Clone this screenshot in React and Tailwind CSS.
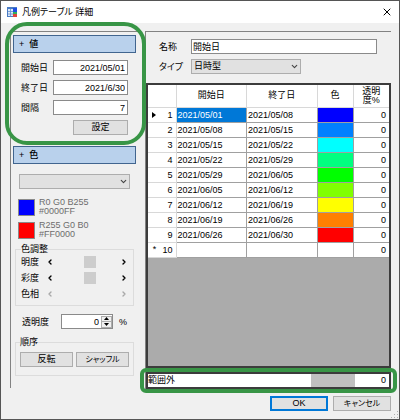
import { ChevronDown, ChevronLeft, ChevronRight, X } from "lucide-react";

const rows = [
  { start: "2021/05/01", end: "2021/05/08", color: "#0000ff" },
  { start: "2021/05/08", end: "2021/05/15", color: "#0080ff" },
  { start: "2021/05/15", end: "2021/05/22", color: "#00ffff" },
  { start: "2021/05/22", end: "2021/05/29", color: "#00ff80" },
  { start: "2021/05/29", end: "2021/06/05", color: "#00ff00" },
  { start: "2021/06/05", end: "2021/06/12", color: "#80ff00" },
  { start: "2021/06/12", end: "2021/06/19", color: "#ffff00" },
  { start: "2021/06/19", end: "2021/06/26", color: "#ff8000" },
  { start: "2021/06/26", end: "2021/06/30", color: "#ff0000" },
  { start: "", end: "", color: "#ffffff" },
];

const values = [
  { id: "start", label: "開始日", value: "2021/05/01" },
  { id: "end", label: "終了日", value: "2021/6/30" },
  { id: "step", label: "間隔", value: "7" },
];

const adjustments = [
  { id: "brightness", label: "明度", enabled: true },
  { id: "saturation", label: "彩度", enabled: true },
  { id: "hue", label: "色相", enabled: false },
];

function AppIcon() {
  return (
    <svg className="h-[10px] w-[10px]" viewBox="0 0 10 10">
      <rect width="10" height="10" fill="#4a7cc4" />
      <rect x="1" y="2" width="5" height="7" fill="#dce8f8" />
      <path d="M1 4.500h5M1 7h5M3.500 2v7" stroke="#5f8fd0" strokeWidth="0.800" />
      <rect x="6" y="1" width="4" height="4" fill="#1f4fe0" />
      <rect x="6" y="5" width="4" height="2" fill="#2fb05a" />
      <rect x="6" y="7" width="4" height="3" fill="#e0433c" />
    </svg>
  );
}

function PushButton({ className, children }) {
  return (
    <button type="button" className={`flex h-[15px] items-center justify-center border bg-[#e1e1e1] leading-none ${className}`}>
      {children}
    </button>
  );
}

function SectionHeader({ children }) {
  return (
    <h2 className="h-[18px] border border-[#41658f] bg-[#b9d1ec] pl-[5px] leading-[16px] font-medium whitespace-pre">{children}</h2>
  );
}

function Select({ id, label, value, className }) {
  return (
    <div className={`relative ${className}`}>
      <select id={id} aria-label={label} defaultValue={value} className="block h-[15px] w-full appearance-none border border-[#adadad] bg-[#e1e1e1] pl-[2px] leading-[13px]">
        <option value={value}>{value}</option>
      </select>
      <ChevronDown className="pointer-events-none absolute top-[3px] right-[2px] h-[9px] w-[9px] text-[#444444]" strokeWidth={3} />
    </div>
  );
}

function Swatch({ colorClass, name, hex }) {
  return (
    <div className="flex items-center gap-[4px]">
      <div className={`h-[17px] w-[17px] border border-[#8a8a8a] ${colorClass}`} />
      <div className="leading-[9px] text-[#6d6d6d]">
        <div>{name}</div>
        <div>{hex}</div>
      </div>
    </div>
  );
}

function ScrollRow({ id, label, enabled }) {
  const arrow = enabled ? "text-black" : "text-[#a8a8a8]";
  return (
    <div className="flex h-[16px] items-center">
      <label htmlFor={id} className="w-[25px]">{label}</label>
      <button type="button" aria-label={`${label} −`} disabled={!enabled} className={arrow}>
        <ChevronLeft className="h-[8px] w-[8px]" strokeWidth={4} />
      </button>
      <input
        id={id}
        type="range"
        defaultValue="55"
        disabled={!enabled}
        className="h-[12px] w-full min-w-0 flex-1 appearance-none bg-transparent [&::-webkit-slider-thumb]:h-[12px] [&::-webkit-slider-thumb]:w-[12px] [&::-webkit-slider-thumb]:appearance-none [&::-webkit-slider-thumb]:bg-[#cdcdcd] disabled:[&::-webkit-slider-thumb]:bg-transparent"
      />
      <button type="button" aria-label={`${label} +`} disabled={!enabled} className={arrow}>
        <ChevronRight className="h-[8px] w-[8px]" strokeWidth={4} />
      </button>
    </div>
  );
}

function Settings() {
  return (
    <aside className="relative w-[128px] shrink-0 self-start border-t border-l border-[#828282] pt-[3px] pr-[2px] pb-[12px] pl-[2px]">
      <SectionHeader>{"+  値"}</SectionHeader>
      <div className="flex flex-col gap-[5px] pt-[7px] pr-[8px] pl-[8px]">
        {values.map((v) => (
          <div key={v.id} className="flex items-center">
            <label htmlFor={v.id} className="w-[32px] shrink-0">{v.label}</label>
            <input id={v.id} defaultValue={v.value} className="h-[15px] w-full min-w-0 border border-[#8a8a8a] bg-white pr-[2px] text-right" />
          </div>
        ))}
        <PushButton className="w-[55px] self-end border-[#adadad]">設定</PushButton>
      </div>

      <div className="mt-[11px]">
        <SectionHeader>{"+  色"}</SectionHeader>
      </div>
      <Select id="palette" label="色" value="" className="mt-[10px] mr-[6px] ml-[6px]" />
      <div className="flex flex-col gap-[5px] pt-[9px] pl-[5px]">
        <Swatch colorClass="bg-[#0000ff]" name="R0 G0 B255" hex="#0000FF" />
        <Swatch colorClass="bg-[#ff0000]" name="R255 G0 B0" hex="#FF0000" />
      </div>

      <fieldset className="mt-[5px] mr-[2px] ml-[2px] border border-[#dcdcdc] pr-[5px] pb-[3px] pl-[5px]">
        <legend className="h-[10px] leading-[10px]">色調整</legend>
        {adjustments.map((a) => (
          <ScrollRow key={a.id} id={a.id} label={a.label} enabled={a.enabled} />
        ))}
      </fieldset>

      <div className="mt-[8px] flex items-center pl-[9px]">
        <label htmlFor="opacity" className="w-[39px]">透明度</label>
        <div className="flex h-[15px] w-[52px] items-center border border-[#8a8a8a] bg-white">
          <input id="opacity" defaultValue="0" className="w-full min-w-0 pr-[2px] text-right" />
          <div className="flex h-[12px] w-[11px] shrink-0 flex-col border border-[#adadad] bg-[#f0f0f0]">
            <button type="button" aria-label="透明度 +" className="flex flex-1 items-center justify-center border-b border-[#adadad]">
              <svg className="h-[3px] w-[5px]" viewBox="0 0 5 3"><path d="M0 3L2.500 0L5 3z" /></svg>
            </button>
            <button type="button" aria-label="透明度 −" className="flex flex-1 items-center justify-center">
              <svg className="h-[3px] w-[5px]" viewBox="0 0 5 3"><path d="M0 0L2.500 3L5 0z" /></svg>
            </button>
          </div>
        </div>
        <span className="pl-[6px]">%</span>
      </div>

      <fieldset className="mt-[8px] mr-[2px] ml-[2px] border border-[#dcdcdc] px-[4px] pb-[8px]">
        <legend className="h-[10px] leading-[10px]">順序</legend>
        <div className="flex gap-[3px] pt-[5px]">
          <PushButton className="flex-1 border-[#adadad]">反転</PushButton>
          <PushButton className="flex-1 border-[#adadad] text-[8px]">シャッフル</PushButton>
        </div>
      </fieldset>

      {/* 値セクションの強調枠 */}
      <div className="pointer-events-none absolute top-[-10px] right-[-8px] left-[-6px] h-[123px] rounded-[22px] border-4 border-[#389546]" />
    </aside>
  );
}

function LegendTable() {
  return (
    <div className="h-[285px] border-2 border-[#3c3c3c] bg-[#ababab]">
      <table className="w-full table-fixed border-collapse">
        <colgroup>
          <col className="w-[28px]" />
          <col />
          <col />
          <col className="w-[36px]" />
          <col className="w-[36px]" />
        </colgroup>
        <thead className="bg-white">
          <tr className="h-[22px] leading-[9px]">
            <th className="border-r border-b border-[#d8d8d8]" />
            <th className="border-r border-b border-[#d8d8d8] font-normal">開始日</th>
            <th className="border-r border-b border-[#d8d8d8] font-normal">終了日</th>
            <th className="border-r border-b border-[#d8d8d8] font-normal">色</th>
            <th className="border-b border-[#d8d8d8] font-normal">透明<br />度%</th>
          </tr>
        </thead>
        <tbody className="bg-white leading-[14px]">
          {rows.map((row, i) => (
            <tr key={i} className="h-[15px]">
              <th className="border-r border-b border-[#d8d8d8] pr-[3px] font-normal">
                <div className="flex items-center justify-between pl-[4px]">
                  <span className="w-[5px] leading-none">
                    {i === 0 && <svg className="h-[6px] w-[4px]" viewBox="0 0 4 6"><path d="M0 0L4 3L0 6z" /></svg>}
                    {i === rows.length - 1 && "*"}
                  </span>
                  {i + 1}
                </div>
              </th>
              <td className={i === 0 ? "border-r border-b border-[#a0a0a0] bg-[#0078d7] pl-[1px] text-white" : "border-r border-b border-[#a0a0a0] pl-[1px]"}>{row.start}</td>
              <td className="border-r border-b border-[#a0a0a0] pl-[1px]">{row.end}</td>
              <td className="border-r border-b border-[#a0a0a0]" style={{ backgroundColor: row.color }} />
              <td className="border-b border-[#a0a0a0] pr-[3px] text-right">0</td>
            </tr>
          ))}
        </tbody>
      </table>
    </div>
  );
}

function Legend() {
  return (
    <main className="min-w-0 flex-1 border-t border-l border-[#828282]">
      <div className="flex flex-col gap-[5px] pt-[7px] pb-[9px] pl-[13px]">
        <div className="flex items-center pr-[14px]">
          <label htmlFor="name" className="w-[32px] shrink-0">名称</label>
          <input id="name" defaultValue="開始日" className="h-[15px] w-full min-w-0 border border-[#8a8a8a] bg-white pl-[1px]" />
        </div>
        <div className="flex items-center">
          <label htmlFor="type" className="w-[32px] shrink-0">タイプ</label>
          <Select id="type" label="タイプ" value="日時型" className="w-[110px]" />
        </div>
      </div>
      <LegendTable />
      <div className="relative mt-[4px]">
        <div className="flex h-[17px] border-2 border-[#3c3c3c] bg-white leading-[13px]">
          <div className="flex-1">範囲外</div>
          <div className="w-[44px] bg-[#c0c0c0]" />
          <div className="w-[34px] pr-[3px] text-right">0</div>
        </div>
        {/* 範囲外行の強調枠 */}
        <div className="pointer-events-none absolute -inset-x-[6px] -inset-y-[4px] rounded-[6px] border-4 border-[#389546]" />
      </div>
    </main>
  );
}

export default function App() {
  return (
    <div className="relative w-full border border-[#555555] bg-[#f0f0f0] font-['Liberation_Sans','Noto_Sans_CJK_JP',sans-serif] text-[9px] leading-[12px] text-black [font-feature-settings:'palt']">
      <header className="flex h-[22px] items-center bg-white pr-[6px] pl-[6px]">
        <AppIcon />
        <h1 className="flex-1 pl-[5px]">凡例テーブル 詳細</h1>
        <button type="button" aria-label="閉じる">
          <X className="h-[12px] w-[12px]" strokeWidth={2} />
        </button>
      </header>
      <div className="flex gap-[7px] pt-[8px] pr-[8px] pl-[9px]">
        <Settings />
        <Legend />
      </div>
      <footer className="flex justify-end gap-[5px] pt-[7px] pr-[8px] pb-[8px]">
        <PushButton className="w-[58px] border-[#0078d7] ring-1 ring-[#0078d7] ring-inset">OK</PushButton>
        <PushButton className="w-[58px] border-[#adadad] text-[8px]">キャンセル</PushButton>
      </footer>
      <svg className="absolute right-0 bottom-0 h-[8px] w-[8px] fill-[#b0b0b0]" viewBox="0 0 8 8">
        <path d="M6 0h1v1H6zM6 3h1v1H6zM6 6h1v1H6zM3 3h1v1H3zM3 6h1v1H3zM0 6h1v1H0z" />
      </svg>
    </div>
  );
}
